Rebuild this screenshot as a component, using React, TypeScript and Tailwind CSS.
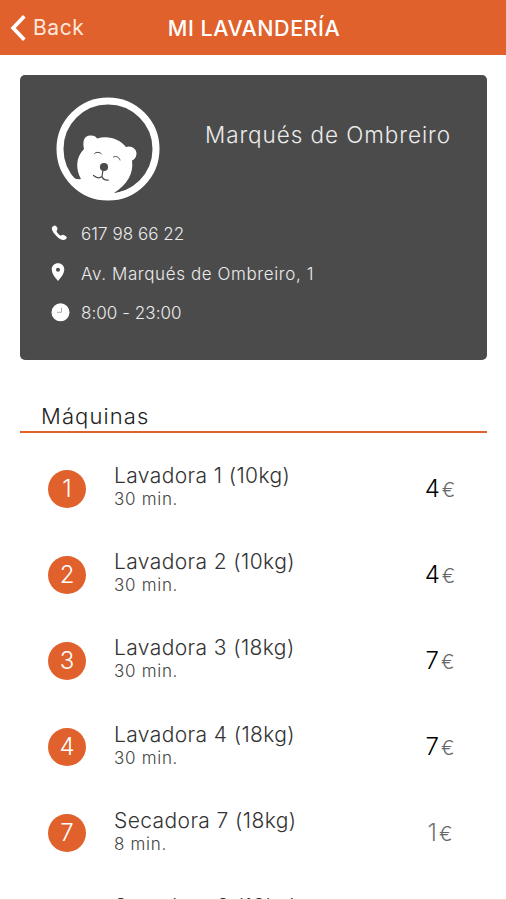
import React from 'react';

const details = [
    { icon: 'phone', text: '617 98 66 22', spacing: 'tracking-[0.05px]' },
    { icon: 'pin', text: 'Av. Marqués de Ombreiro, 1', spacing: 'tracking-[0.6px]' },
    { icon: 'clock', text: '8:00 - 23:00', spacing: 'tracking-[0.05px]' },
];

const machines = [
    { id: 1, name: 'Lavadora 1 (10kg)', time: '30 min.', price: 4, color: 'text-black' },
    { id: 2, name: 'Lavadora 2 (10kg)', time: '30 min.', price: 4, color: 'text-black' },
    { id: 3, name: 'Lavadora 3 (18kg)', time: '30 min.', price: 7, color: 'text-black' },
    { id: 4, name: 'Lavadora 4 (18kg)', time: '30 min.', price: 7, color: 'text-black' },
    { id: 7, name: 'Secadora 7 (18kg)', time: '8 min.', price: 1, color: 'text-[#777777]' },
    { id: 8, name: 'Secadora 8 (18kg)', time: '8 min.', price: 1, color: 'text-[#777777]' },
];

const BearLogo = () => (
    <svg viewBox="0 0 104 104" className="w-[104px] h-[104px]">
        <circle cx="52" cy="52" r="48" fill="none" stroke="white" strokeWidth="7" />
        <path
            d="M12 76 Q16 83 25 82 C20 73 19 61 28 52 C26 43 29 38 35 38.500 C38 38.500 40 39.500 41 41.500 C52 38 64 42 70 50 C75 48 81 52 80.500 57 C80 61 78 63 76 63.500 C78 76 71 88 58 96 C70 95 82 89 90 80 L86 88 L72 98 L52 103 L30 98 L14 82 Z"
            fill="white"
        />
        <g fill="none" stroke="#4b4b4b" strokeLinecap="round">
            <path d="M38.500 56.500 C40 54.800 44 54.800 45.500 57" strokeWidth="1" />
            <path d="M57.500 60 C60 58.500 63 60 64 63" strokeWidth="1" />
            <path d="M47 73 L46 79.500 M37.500 78.500 Q42 82.500 46 79.500 Q47 83.500 52.500 83" strokeWidth="1.200" />
        </g>
        <circle cx="48" cy="70" r="4.100" fill="#4b4b4b" />
    </svg>
);

const DetailIcon = ({ name }: { name: string }) => {
    if (name === 'phone') {
        return (
            <svg viewBox="0 0 20 20" className="w-5 h-5" fill="white">
                <path d="M3.500 1 C5 -.2 6.500 .8 7.300 3 C7.800 4.400 7.200 5.200 6.500 6 C7 8 9 10 11 10.700 C12 9.500 13 9.400 14.300 10.200 C16.800 11.500 17.400 12.500 16.200 13.700 C14 15.900 11 15.200 7.700 12.300 C4 9 1.600 5.500 1.800 3 C2 2 2.700 1.500 3.500 1 Z" />
            </svg>
        );
    }
    if (name === 'pin') {
        return (
            <svg viewBox="0 0 20 20" className="w-5 h-5 overflow-visible" fill="white">
                <path fillRule="evenodd" d="M8 -.8 C11.600 -.8 14.300 1.900 14.300 5.400 C14.300 9 11.500 13 8 17 C4.500 13 1.700 9 1.700 5.400 C1.700 1.900 4.400 -.8 8 -.8 Z M8 3.800 A2 2 0 1 0 8 7.800 A2 2 0 1 0 8 3.800 Z" />
            </svg>
        );
    }
    return (
        <svg viewBox="0 0 20 20" className="w-5 h-5 overflow-visible">
            <circle cx="10.500" cy="8.300" r="9" fill="white" />
            <path d="M11.500 3.800 V8.300 H7" fill="none" stroke="#aaaaaa" strokeWidth="1" />
        </svg>
    );
};

const Header = () => (
    <header className="grid grid-cols-[150px_1fr_150px] items-center h-[54.500px] pt-px bg-[#e0612b] text-white">
        <a href="#" className="flex items-center pl-[10px] gap-[7px] text-[21px]">
            <svg viewBox="0 0 16 26" className="w-4 h-[26px]" fill="none" stroke="white" strokeWidth="3.800">
                <path d="M14.300 1.300 L3.200 13 L14.300 24.700" />
            </svg>
            <span className="text-[#ffe6da] tracking-[0.6px]">Back</span>
        </a>
        <h1 className="ml-[2px] text-center whitespace-nowrap text-[21.500px] font-medium tracking-[0.5px]">MI LAVANDERÍA</h1>
    </header>
);

const LaundryCard = () => (
    <section className="ml-5 mr-[19px] mt-[20.500px] h-[285px] rounded-[5px] bg-[#4b4b4b] text-[#ececec]">
        <div className="flex pt-[22px] pl-9">
            <BearLogo />
            <h2 className="ml-[45px] mt-[22px] leading-8 text-[22.500px] font-light tracking-[0.93px] whitespace-nowrap">Marqués de Ombreiro</h2>
        </div>
        <ul className="mt-[14px] pl-[30px]">
            {details.map((detail) => (
                <li key={detail.icon} className="flex items-center h-[39.500px] text-[17px]">
                    <DetailIcon name={detail.icon} />
                    <span className={`ml-[11px] whitespace-nowrap font-light ${detail.spacing}`}>{detail.text}</span>
                </li>
            ))}
        </ul>
    </section>
);

const App = () => {
    return (
        <div className="h-[900px] overflow-hidden bg-white border-b border-[#f6d5d0] font-['Inter',sans-serif]">
            <Header />
            <LaundryCard />
            <h3 className="ml-5 mr-[19px] mt-[40px] h-[33px] pl-[21px] leading-8 border-b-2 border-[#e0612b] text-[22px] font-light tracking-[1.1px] text-[#222222]">
                Máquinas
            </h3>
            <ul className="pt-[12.500px]">
                {machines.map((machine) => (
                    <li key={machine.id} className="flex items-center h-[86.200px] pl-12">
                        <span className="flex items-center justify-center w-[38px] h-[38px] rounded-full bg-[#e0612b] text-white text-[24px] font-light">
                            {machine.id}
                        </span>
                        <div className="ml-[28px] -mt-[5px] w-[279px] font-light">
                            <p className="text-[21px] leading-[26px] tracking-[0.4px] text-[#333333]">{machine.name}</p>
                            <p className="text-[17px] leading-[20px] tracking-[0.7px] text-[#444444]">{machine.time}</p>
                        </div>
                        <div className={`w-[94px] text-center font-light ${machine.color}`}>
                            <span className="text-[24px]">{machine.price}</span>
                            <span className="ml-[2px] text-[20px] text-[#666666]">€</span>
                        </div>
                    </li>
                ))}
            </ul>
        </div>
    );
};

export default App;
